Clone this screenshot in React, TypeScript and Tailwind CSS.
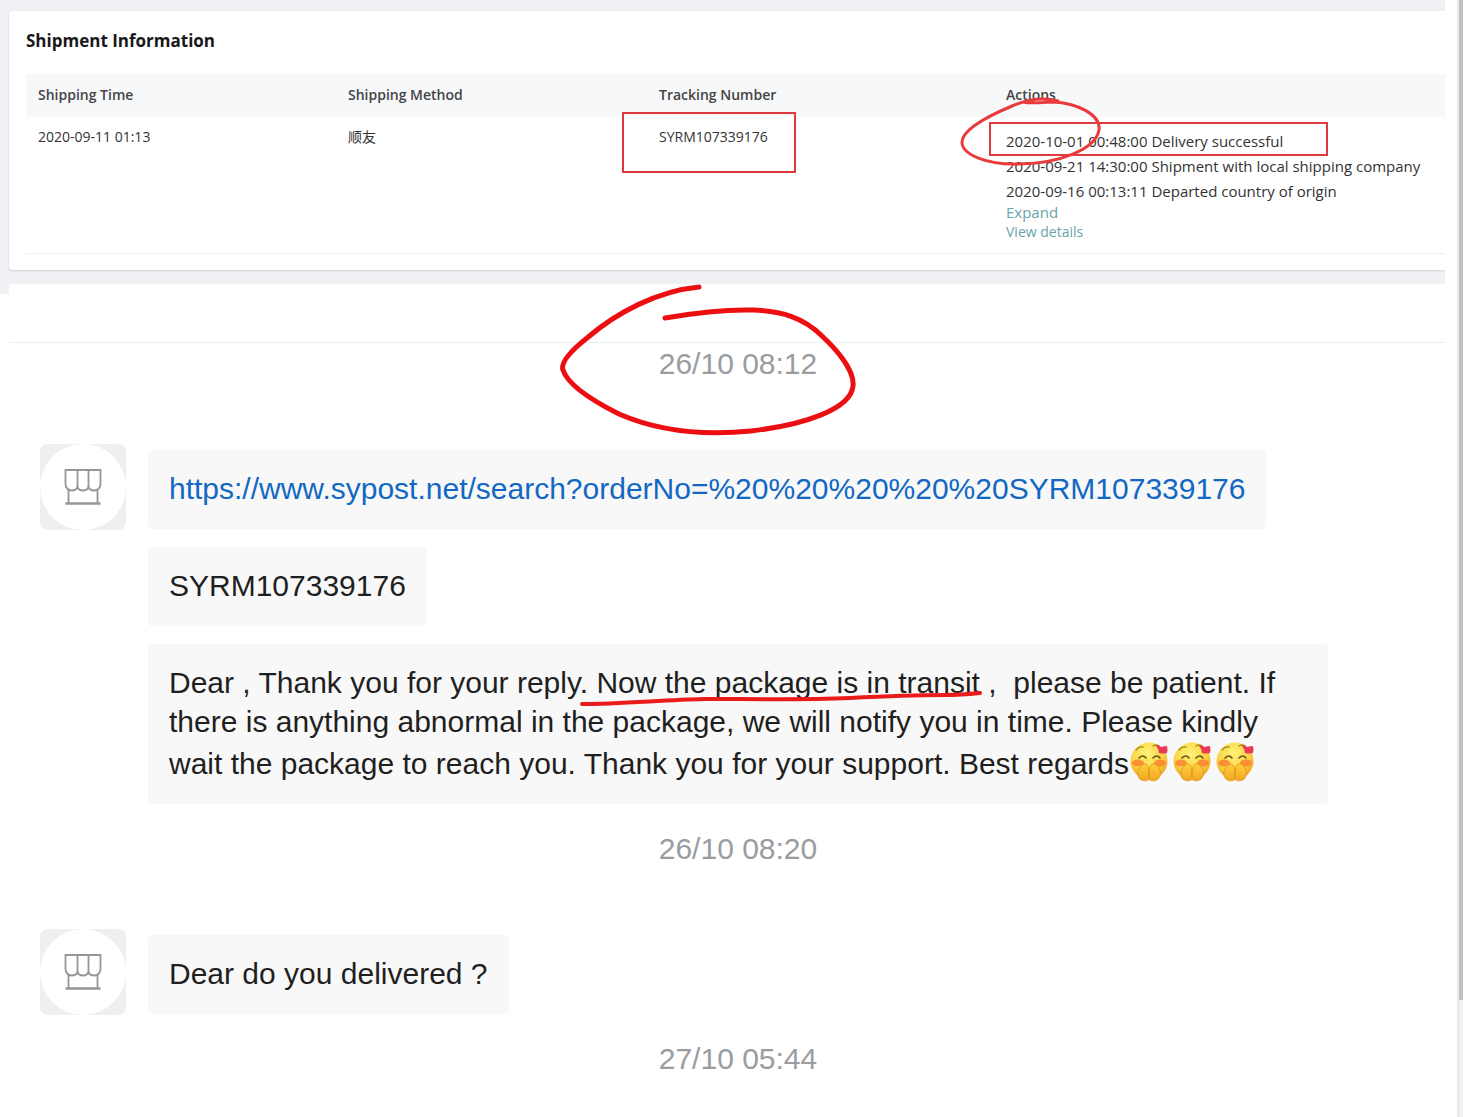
import React from 'react';

interface TrackingEvent {
    time: string;
    text: string;
}

const events: TrackingEvent[] = [
    { time: '2020-10-01 00:48:00', text: 'Delivery successful' },
    { time: '2020-09-21 14:30:00', text: 'Shipment with local shipping company' },
    { time: '2020-09-16 00:13:11', text: 'Departed country of origin' }
];

const trackingUrl = 'https://www.sypost.net/search?orderNo=%20%20%20%20%20SYRM107339176';

const ShopAvatar: React.FC = () => (
    <div className="size-[86px] shrink-0 overflow-hidden rounded-lg bg-[#efefef]">
        <div className="flex size-full items-center justify-center rounded-full bg-white">
            <svg width="38" height="38" viewBox="0 0 38 38" fill="none" stroke="#969696" strokeWidth="1.8" aria-hidden="true">
                <path d="M1.5 2H36.5V16C36.5 20 33.5 22.5 30.5 22.5S25 21 24.5 18.5C24 21 21.5 22.5 19 22.5S14 21 13.5 18.5C13 21 10.5 22.5 7.5 22.5S1.5 20 1.5 16Z" />
                <path d="M13.5 2v17M24.5 2v17M4.5 22v13M33.5 22v13" />
                <path d="M1.5 35.5h35" strokeWidth="2.4" />
            </svg>
        </div>
    </div>
);

const BlushEmoji: React.FC = () => (
    <svg className="mt-px mr-1 inline-block align-[-8px]" width="39" height="40" viewBox="0 0 39 40" role="img" aria-label="smiling face covering mouth">
        <defs>
            <radialGradient id="face" cx="45%" cy="30%" r="70%">
                <stop offset="0" stopColor="#fff27a" />
                <stop offset="0.6" stopColor="#fbd644" />
                <stop offset="1" stopColor="#eda41d" />
            </radialGradient>
            <linearGradient id="hand" x1="0" y1="0" x2="0" y2="1">
                <stop offset="0" stopColor="#ffd03e" />
                <stop offset="1" stopColor="#f2a51f" />
            </linearGradient>
        </defs>
        <circle cx="20" cy="19" r="18.5" fill="url(#face)" />
        <ellipse cx="9" cy="21" rx="6" ry="3.5" fill="#fb8333" opacity="0.85" />
        <ellipse cx="31" cy="21" rx="6" ry="3.5" fill="#fb8333" opacity="0.85" />
        <path d="M7 8q3-4 7-3M24 4q3-2 6 0" stroke="#a98b1d" strokeWidth="1.3" fill="none" strokeLinecap="round" />
        <path d="M10 16q4-4 7 0M24 16q4-4 7 0" stroke="#66551b" strokeWidth="1.6" fill="none" strokeLinecap="round" />
        <path d="M20 37c-2 3-8 2-10-1-3-5 0-11 5-14 4-1 5 4 5 15z" fill="url(#hand)" stroke="#dc901e" strokeWidth="0.8" />
        <path d="M20 37c2 3 8 2 10-1 3-5 1-11-4-14-5-1-6 4-6 15z" fill="url(#hand)" stroke="#dc901e" strokeWidth="0.8" />
        <path d="M27 4q3-2 5 1q4-1 6-1q1 4 0 7q-4 1-8 0q0-4-3-7z" fill="#ea3a58" />
    </svg>
);

const Bubble: React.FC<{ children: React.ReactNode }> = ({ children }) => (
    <div className="max-w-[1180px] rounded-sm bg-[#f8f8f8] px-[21px] pt-[19px] pb-[21px] text-[30px] leading-[39px] text-[#1f1f1f]">
        {children}
    </div>
);

const Timestamp: React.FC<{ children: React.ReactNode }> = ({ children }) => (
    <p className="text-center text-[30px] leading-10 text-[#999da1]">{children}</p>
);

const ShipmentCard: React.FC = () => (
    <section className="rounded-l bg-white pt-4 pb-4 pl-[17px] font-['Open_Sans','Noto_Sans_CJK_SC',sans-serif] shadow-sm">
        <h2 className="text-[17px] leading-7 font-bold text-[#191919]">Shipment Information</h2>
        <table className="mt-[19px] w-full table-fixed border-b border-[#efefef] text-left">
            <thead className="bg-[#f7f8fa] text-sm text-[#444]">
                <tr className="h-[43px]">
                    <th className="w-[310px] px-3 pb-[2px] font-semibold">Shipping Time</th>
                    <th className="w-[311px] px-3 pb-[2px] font-semibold">Shipping Method</th>
                    <th className="w-[347px] px-3 pb-[2px] font-semibold">Tracking Number</th>
                    <th className="px-3 pb-[2px] font-semibold">Actions</th>
                </tr>
            </thead>
            <tbody className="align-top text-[#333]">
                <tr className="text-sm leading-5">
                    <td className="px-3 pt-[10px]">2020-09-11 01:13</td>
                    <td className="px-3 pt-[10px]">顺友</td>
                    <td className="relative px-3 pt-[10px]">
                        SYRM107339176
                        <span className="absolute -top-[5px] -left-[25px] h-[61px] w-[174px] border-2 border-[#dd3a40]" />
                    </td>
                    <td className="relative px-3 pt-3 pb-[11px] text-[15px]">
                        <ul className="leading-[25px] whitespace-nowrap">
                            {events.map((event) => (
                                <li key={event.time}>{event.time} {event.text}</li>
                            ))}
                        </ul>
                        <div className="-mt-[2px] text-[#6aa3a8]">
                            <a href="#expand" className="block w-fit">Expand</a>
                            <a href="#details" className="block w-fit text-sm leading-5">View details</a>
                        </div>
                        <span className="absolute top-[5px] -left-[5px] h-[34px] w-[339px] border-2 border-[#dd3a40]" />
                        <svg className="absolute -top-[22px] -left-[37px]" width="146" height="74" viewBox="0 0 146 74" fill="none" stroke="#ea3a3c" strokeWidth="3" strokeLinecap="round" aria-hidden="true">
                            <path d="M101 6C86 2 69 5 55 11C36 19 4 34 5 48C6 60 31 70 61 69C102 69 139 54 142 35C144 19 119 8 96 7C87 7 75 9 66 7" />
                        </svg>
                    </td>
                </tr>
            </tbody>
        </table>
    </section>
);

const ChatPanel: React.FC = () => (
    <section className="relative -mt-[10px] ml-[9px] bg-white font-['Liberation_Sans',Arial,sans-serif]">
        <div className="mr-3 h-[59px] border-b border-[#ededed]" />
        <div className="mt-px mb-[60px] flex justify-center pl-[10px]">
            <div className="relative">
                <Timestamp>26/10 08:12</Timestamp>
                <svg className="absolute -top-[62px] -left-[103px]" width="304" height="156" viewBox="0 0 304 156" fill="none" stroke="#ec0f12" strokeWidth="5" strokeLinecap="round" strokeLinejoin="round" aria-hidden="true">
                    <path d="M143 5C101 9 60 31 31 56C16 68 4 80 7 88C12 103 35 118 63 132C102 149 145 154 195 149C248 143 295 127 297 104C299 88 279 66 266 54C248 36 226 29 197 28C166 27 138 31 109 36" />
                </svg>
            </div>
        </div>
        <div className="flex items-start gap-[22px] pl-[31px]">
            <ShopAvatar />
            <div className="flex flex-col items-start gap-[18px] pt-[6px]">
                <Bubble>
                    <a href={trackingUrl} className="text-[#1268c3]">{trackingUrl}</a>
                </Bubble>
                <Bubble>SYRM107339176</Bubble>
                <Bubble>
                    Dear , Thank you for your reply.{' '}
                    <span className="relative inline-block">
                        Now the package is in transit
                        <svg className="absolute -left-4 top-7 h-4 w-[402px]" viewBox="0 0 402 16" fill="none" stroke="#ec1b1b" strokeWidth="4" strokeLinecap="round" aria-hidden="true">
                            <path d="M2 13C41 13 82 9 124 8C172 8 224 9 270 7C307 5 337 4 366 4C378 4 390 3 400 2" />
                        </svg>
                    </span>
                    {' '},&nbsp; please be patient. If there is anything abnormal in the package, we will notify you in time. Please kindly wait the package to reach you. Thank you for your support. Best regards<BlushEmoji /><BlushEmoji /><BlushEmoji />
                </Bubble>
            </div>
        </div>
        <div className="mt-[25px] mb-[60px] pl-[10px]">
            <Timestamp>26/10 08:20</Timestamp>
        </div>
        <div className="flex items-start gap-[22px] pl-[31px]">
            <ShopAvatar />
            <div className="pt-[6px]">
                <Bubble>Dear do you delivered ?</Bubble>
            </div>
        </div>
        <div className="mt-6 pl-[10px]">
            <Timestamp>27/10 05:44</Timestamp>
        </div>
    </section>
);

const App: React.FC = () => {
    return (
        <div className="flex min-h-screen bg-white">
            <main className="min-w-0 flex-1">
                <div className="mr-3 overflow-hidden bg-[#f0f1f4] pt-[11px] pb-6 pl-[9px]">
                    <ShipmentCard />
                </div>
                <ChatPanel />
            </main>
            <div className="w-[6px] border-l-2 border-[#e8e8e8] bg-[#f0f0f0]">
                <div className="h-[1000px] bg-[#c1c1c1]" />
            </div>
        </div>
    );
};

export default App;
